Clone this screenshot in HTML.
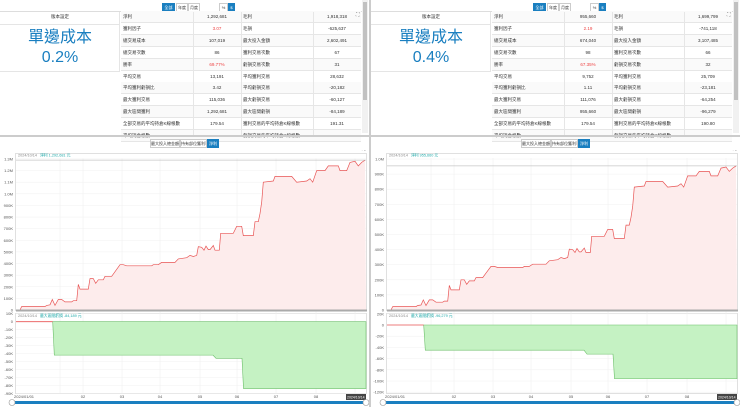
<!DOCTYPE html><html><head><meta charset="utf-8"><style>
*{margin:0;padding:0;box-sizing:border-box}
body{width:740px;height:407px;overflow:hidden;background:#fff;font-family:"Liberation Sans","Noto Sans CJK TC",sans-serif;position:relative}
.p{position:absolute;top:0;width:369px;height:407px;overflow:hidden}
.a{position:absolute}
.btn{position:absolute;height:9px;font-size:4px;line-height:7px;text-align:center;border:1px solid #ccc;background:#fff;color:#333;white-space:nowrap;overflow:hidden}
.bl{background:#1a7fc0;color:#fff;border-color:#1a7fc0}
.t{position:absolute;font-size:4.5px;line-height:6px;color:#333;white-space:nowrap}
.big{position:absolute;left:0;width:120px;text-align:center;color:#1a7fc0;font-size:16px;line-height:20px;height:20px}
</style></head><body>
<div id="root"></div>
<script>
const L=[[48,0],[60,0],[65,30],[135,30],[140,40],[150,45],[157,90],[165,40],[175,90],[185,90],[195,70],[215,70],[220,80],[230,80],[235,220],[240,180],[265,180],[270,270],[280,270],[287,230],[295,260],[310,260],[315,290],[335,290],[345,330],[360,390],[370,390],[380,380],[455,380],[460,390],[475,390],[485,410],[525,410],[535,440],[560,450],[570,470],[580,460],[590,470],[595,545],[605,540],[612,515],[618,550],[625,520],[630,520],[640,555],[645,515],[658,515],[662,660],[700,660],[710,720],[725,720],[730,640],[760,640],[765,760],[775,760],[780,830],[785,930],[790,1100],[820,1110],[825,1150],[875,1150],[890,1100],[920,1110],[930,1130],[938,1100],[950,1200],[975,1200],[985,1240],[1015,1240],[1020,1200],[1040,1200],[1050,1270],[1065,1280],[1075,1240],[1085,1270],[1095,1290]];
const P=[
{pct:"0.2%",k:1,sc:0.1162,ticks:["1.3M","1.2M","1.1M","1.0M","900K","800K","700K","600K","500K","400K","300K","200K","100K","0"],tstep:100,
dz:321.7,ds:0.796,dd:[42,46,84],dt:["10K","0","-10K","-20K","-30K","-40K","-50K","-60K","-70K","-80K","-90K"],dts:10,dtop:10,
v:["1,292,681","3.07","107,019","86","69.77%","13,191","3.42","115,036","1,292,681","179.54","—"],w:["1,918,318","-625,637","2,602,491","67","31","28,632","-20,182","-60,127","-84,189","191.31","—"],title:"淨利 1,292,681 元",ddt:"最大區間虧損 -84,189 元"},
{pct:"0.4%",k:0.74,sc:0.151,ticks:["1.0M","900K","800K","700K","600K","500K","400K","300K","200K","100K","0"],tstep:100,
dz:325,ds:0.56,dd:[45,52,96],dt:["20K","0","-20K","-40K","-60K","-80K","-100K","-120K"],dts:20,dtop:20,
v:["955,660","2.19","674,040","98","67.35%","9,752","1.11","111,076","955,660","179.54","—"],w:["1,699,799","-741,118","3,107,485","66","32","25,709","-23,181","-64,254","-96,279","190.80","—"],title:"淨利 955,660 元",ddt:"最大區間虧損 -96,279 元"}];
const la=["淨利","獲利因子","總交易成本","總交易次數","勝率","平均交易","平均獲利虧損比","最大獲利交易","最大區間獲利","全部交易的平均持倉K線根數","平均持倉根數"];
const lb=["毛利","毛損","最大投入金額","獲利交易次數","虧損交易次數","平均獲利交易","平均虧損交易","最大虧損交易","最大區間虧損","獲利交易的平均持倉K線根數","虧損交易的平均持倉K線根數"];
let h="";
P.forEach((d,i)=>{
let s=`<div class="p" style="left:${i?371:0}px">`;
s+=`<div class="btn bl" style="left:162px;top:3px;width:13px">全部</div><div class="btn" style="left:176px;top:3px;width:12px">年度</div><div class="btn" style="left:188px;top:3px;width:12px">月度</div><div class="btn" style="left:219px;top:3px;width:9px">%</div><div class="btn bl" style="left:228px;top:3px;width:7px">$</div>`;
s+=`<div class="a" style="left:0;top:11px;width:362px;height:1px;background:#ddd"></div>`;
s+=`<div class="a" style="left:0;top:12px;width:120px;height:60px;border-right:1px solid #e5e5e5;border-bottom:1px solid #e5e5e5"></div>`;
s+=`<div class="a" style="left:0;top:24px;width:120px;height:1px;background:#e5e5e5"></div>`;
s+=`<div class="t" style="left:0;width:120px;text-align:center;top:14px">版本設定</div>`;
s+=`<div class="big" style="top:28px">單邊成本</div><div class="big" style="top:48px">${d.pct}</div>`;
for(let r=0;r<11;r++){let y=11+r*11.9;
s+=`<div class="a" style="left:121px;top:${y}px;width:240px;height:12px;border-bottom:1px solid #e6e6e6;background:${r%2?'#fff':'#fafafa'}"></div>`;
s+=`<div class="t" style="left:123px;top:${y+3}px">${la[r]}</div><div class="t" style="left:193px;width:48px;text-align:center;top:${y+3}px;color:${(r==1||r==4)?'#e44':'#333'}">${d.v[r]}</div><div class="t" style="left:243px;top:${y+3}px">${lb[r]}</div><div class="t" style="left:313px;width:48px;text-align:center;top:${y+3}px">${d.w[r]}</div>`;}
["193","241","313"].forEach(x=>s+=`<div class="a" style="left:${x}px;top:12px;width:1px;height:123px;background:#e6e6e6"></div>`);
s+=`<div class="a" style="left:362px;top:0;width:6px;height:133px;background:#f1f1f1"></div><div class="a" style="left:363px;top:2px;width:4px;height:98px;background:#c1c1c1"></div>`;
s+=`<div class="a" style="left:0;top:135px;width:369px;height:2px;background:#ccc"></div>`;
s+=`<div class="btn" style="left:150px;top:139px;width:30px">最大投入總金額</div><div class="btn" style="left:180px;top:139px;width:27px">持有部位獲利率</div><div class="btn bl" style="left:207px;top:139px;width:12px">淨利</div>`;
let sv=`<svg class="a" style="left:0;top:150px" width="369" height="257" viewBox="0 150 369 257">`;
sv+=`<rect x="15.5" y="153.5" width="351" height="157" fill="#fff" stroke="#ccc" stroke-width="0.6"/>`;
sv+=`<rect x="15.5" y="313.5" width="351" height="80" fill="#fff" stroke="#ccc" stroke-width="0.6"/>`;
const xs=[60,83,122,160,200,237,276,316,355];
xs.forEach(x=>sv+=`<line x1="${x}" y1="158" x2="${x}" y2="393" stroke="#eee" stroke-width="0.5"/>`);
d.ticks.forEach((t,j)=>{let val=(d.ticks.length-1-j)*d.tstep;let y=310-val*d.sc;sv+=`<line x1="16" y1="${y}" x2="366" y2="${y}" stroke="#f0f0f0" stroke-width="0.5"/><text x="13" y="${y+1.5}" font-size="4" fill="#555" text-anchor="end">${t}</text>`;});
let pts=L.map(p=>[(p[0]/3).toFixed(1),(310-p[1]*d.k*d.sc).toFixed(1)]);
let pl=pts.map(p=>p.join(",")).join(" ");
sv+=`<polygon points="16,310 ${pl} 366,310" fill="#fdecec"/><polyline points="${pl}" fill="none" stroke="#e85555" stroke-width="0.7"/>`;
let top=pts[pts.length-1][1];
sv+=`<line x1="16" y1="${top}" x2="366" y2="${top}" stroke="#999" stroke-width="0.4"/>`;
sv+=`<rect x="16" y="309.5" width="351" height="2" fill="#aaa"/>`;
sv+=`<text x="18" y="156.5" font-size="3.8" fill="#888">2024/10/14</text><text x="40" y="156.5" font-size="3.8" fill="#2aa">${d.title}</text>`;
d.dt.forEach((t,j)=>{let val=d.dtop-j*d.dts;let y=d.dz-val*d.ds;sv+=`<text x="13" y="${y+1.5}" font-size="4" fill="#555" text-anchor="end">${t}</text><line x1="16" y1="${y}" x2="366" y2="${y}" stroke="#f0f0f0" stroke-width="0.5"/>`;});
let z=d.dz,y1=z+d.dd[0]*d.ds,y2=z+d.dd[1]*d.ds,y3=z+d.dd[2]*d.ds;
sv+=`<polygon points="52.7,${z} 54.3,${y1} 213,${y1} 216,${y2} 242,${y2} 243.5,${y3} 366,${y3} 366,${z}" fill="#c5f2c3" stroke="#6cbf6a" stroke-width="0.6"/>`;
sv+=`<line x1="16" y1="${z}" x2="52.7" y2="${z}" stroke="#e85555" stroke-width="0.8"/>`;
sv+=`<text x="18" y="317" font-size="3.8" fill="#888">2024/10/14</text><text x="40" y="317" font-size="3.8" fill="#2aa">${d.ddt}</text>`;
const xl=["2024/01/01","02","03","04","05","06","07","08","09"];
xl.forEach((t,j)=>sv+=`<text x="${j?xs[j]:14}" y="398" font-size="4" fill="#555" ${j?'text-anchor="middle"':''}>${t}</text>`);
sv+=`<rect x="346" y="394" width="20" height="6" fill="#444"/><text x="347" y="398.5" font-size="3.5" fill="#fff">2024/10/14</text>`;
sv+=`<rect x="14" y="401" width="352" height="3" rx="1.5" fill="#1a7fc0"/><circle cx="12" cy="402.5" r="3" fill="#fff" stroke="#999" stroke-width="0.6"/><circle cx="366" cy="402.5" r="3" fill="#fff" stroke="#999" stroke-width="0.6"/>`;
sv+=`<text x="362" y="150" font-size="5" fill="#666">⛶</text></svg>`;
s+=sv+`<div class="t" style="left:356px;top:12px;font-size:5px;color:#666">⛶</div></div>`;
h+=s;});
h+=`<div class="a" style="left:369px;top:0;width:2px;height:407px;background:#ccc"></div>`;
document.getElementById("root").innerHTML=h;
</script></body></html>
